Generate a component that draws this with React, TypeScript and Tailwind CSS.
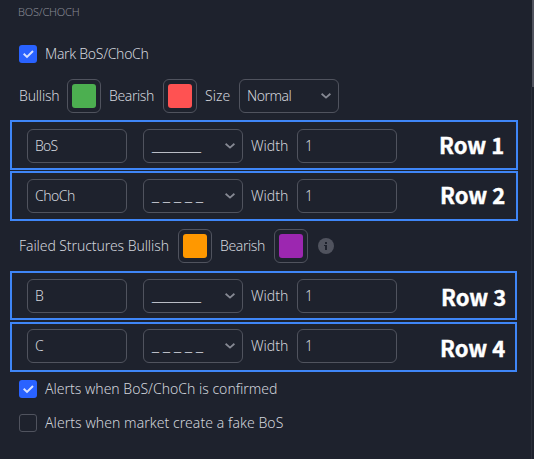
import type { ReactNode } from "react";

function Label({ children, className = "" }: { children: ReactNode; className?: string }) {
  return <span className={`block shrink-0 whitespace-nowrap ${className}`}>{children}</span>;
}

function Checkbox({ checked = false }: { checked?: boolean }) {
  return checked ? (
    <span className="flex size-[18px] shrink-0 items-center justify-center rounded-[3px] bg-[#2962ff]">
      <svg width="18" height="18" viewBox="0 0 18 18" fill="none">
        <path d="M4.7 8.8 8 11.9 14 6" stroke="#d5e0ff" strokeWidth="2" />
      </svg>
    </span>
  ) : (
    <span className="size-[18px] shrink-0 rounded-[3px] border border-[#50535e]" />
  );
}

function Swatch({ color }: { color: string }) {
  return (
    <span className="flex size-[34px] shrink-0 items-center justify-center rounded-md border border-[#50535e]">
      <span className={`size-6 rounded-[3px] ${color}`} />
    </span>
  );
}

function Field({ children }: { children: ReactNode }) {
  return (
    <div className="flex h-[34px] w-[100px] shrink-0 items-center rounded-md border border-[#50535e] pl-[7px]">
      {children}
    </div>
  );
}

function Select({ children }: { children: ReactNode }) {
  return (
    <div className="flex h-[34px] w-[100px] shrink-0 items-center justify-between rounded-md border border-[#50535e] pr-[7px] pl-2">
      {children}
      <svg width="10" height="6" viewBox="0 0 10 6" fill="none" className="shrink-0">
        <path d="M.6.8 5 4.6 9.4.8" stroke="#868993" strokeWidth="1.8" />
      </svg>
    </div>
  );
}

function StyleRow({ name, dashed = false, tag, className, nameClass, tagClass }: {
  name: string; dashed?: boolean; tag: string; className: string; nameClass: string; tagClass: string;
}) {
  return (
    <div className={`ml-[10px] flex items-start border-2 border-[#3f86f7] pl-[15px] ${className}`}>
      <Field><Label className={nameClass}>{name}</Label></Field>
      <div className="ml-4">
        <Select>
          <span className="font-['Liberation_Sans',sans-serif] text-[12.6px] whitespace-nowrap [word-spacing:0.5px]">
            {dashed ? "_ _ _ _ _" : "_______"}
          </span>
        </Select>
      </div>
      <Label className="ml-2 w-[46px] leading-[34px]">Width</Label>
      <Field><Label>1</Label></Field>
      <span className={`block whitespace-nowrap font-['Noto_Sans_CJK_SC',sans-serif] text-[22px] leading-[34px] font-bold text-white [-webkit-text-stroke:0.4px_white] ${tagClass}`}>
        {tag}
      </span>
    </div>
  );
}

export default function App() {
  return (
    <div className="relative flex h-[459px] w-[534px] flex-col overflow-hidden bg-[#1e222d] font-['Noto_Sans',sans-serif] text-[14px] leading-[18px] font-light text-[#d1d4dc]">
      <h2 className="mt-1 ml-[18px] h-4 text-[11px] leading-4 tracking-[-0.2px] text-[#868993]">BOS/CHOCH</h2>
      <div className="mt-[25px] ml-[19px] flex h-[18px] items-center gap-2">
        <Checkbox checked />
        <Label className="tracking-[-0.3px]">Mark BoS/ChoCh</Label>
      </div>
      <div className="mt-4 ml-[19px] flex h-[34px] items-center">
        <Label className="w-12 tracking-[-0.2px]">Bullish</Label>
        <Swatch color="bg-[#4caf50]" />
        <Label className="ml-2 w-[54px] tracking-[-0.4px]">Bearish</Label>
        <Swatch color="bg-[#ff5252]" />
        <Label className="ml-2 w-[34px]">Size</Label>
        <Select><Label className="-ml-px tracking-[-0.5px]">Normal</Label></Select>
      </div>
      <StyleRow name="BoS" tag="Row 1" className="mt-[7px] h-[50px] w-[508px] pt-[7px]" nameClass="tracking-[-0.8px]" tagClass="-mt-[2px] ml-[42px]" />
      <StyleRow name="ChoCh" dashed tag="Row 2" className="mt-px h-[50px] w-[508px] pt-[6px]" nameClass="tracking-[-0.5px]" tagClass="-mt-[2px] ml-[43px]" />
      <div className="mt-2 ml-[19px] flex h-[34px] items-center">
        <Label className="w-[159px] tracking-[-0.08px]">Failed Structures Bullish</Label>
        <Swatch color="bg-[#ff9800]" />
        <Label className="ml-2 w-[54px] tracking-[-0.4px]">Bearish</Label>
        <Swatch color="bg-[#9c27b0]" />
        <svg width="16" height="16" viewBox="0 0 16 16" className="ml-[10px]">
          <circle cx="8" cy="8" r="8" fill="#50535e" />
          <path d="M7 4h2v2H7zM6 7h3v5H7V8H6z" fill="#1e222d" />
        </svg>
      </div>
      <StyleRow name="B" tag="Row 3" className="mt-2 h-[49px] w-[507px] pt-[6px]" nameClass="" tagClass="ml-[44px]" />
      <StyleRow name="C" dashed tag="Row 4" className="mt-[2px] h-[50px] w-[507px] pt-[5px]" nameClass="" tagClass="mt-px ml-[43px]" />
      <div className="mt-2 ml-[19px] flex h-[18px] items-center gap-2">
        <Checkbox checked />
        <Label>Alerts when BoS/ChoCh is confirmed</Label>
      </div>
      <div className="mt-4 ml-[19px] flex h-[18px] items-center gap-2">
        <Checkbox />
        <Label className="tracking-[0.06px]">Alerts when market create a fake BoS</Label>
      </div>
      <div className="absolute top-0 right-0 h-[87px] w-[2px] bg-[#50535e]" />
      <div className="absolute top-[87px] right-[2px] bottom-0 w-px bg-[#2a2e39]" />
    </div>
  );
}
